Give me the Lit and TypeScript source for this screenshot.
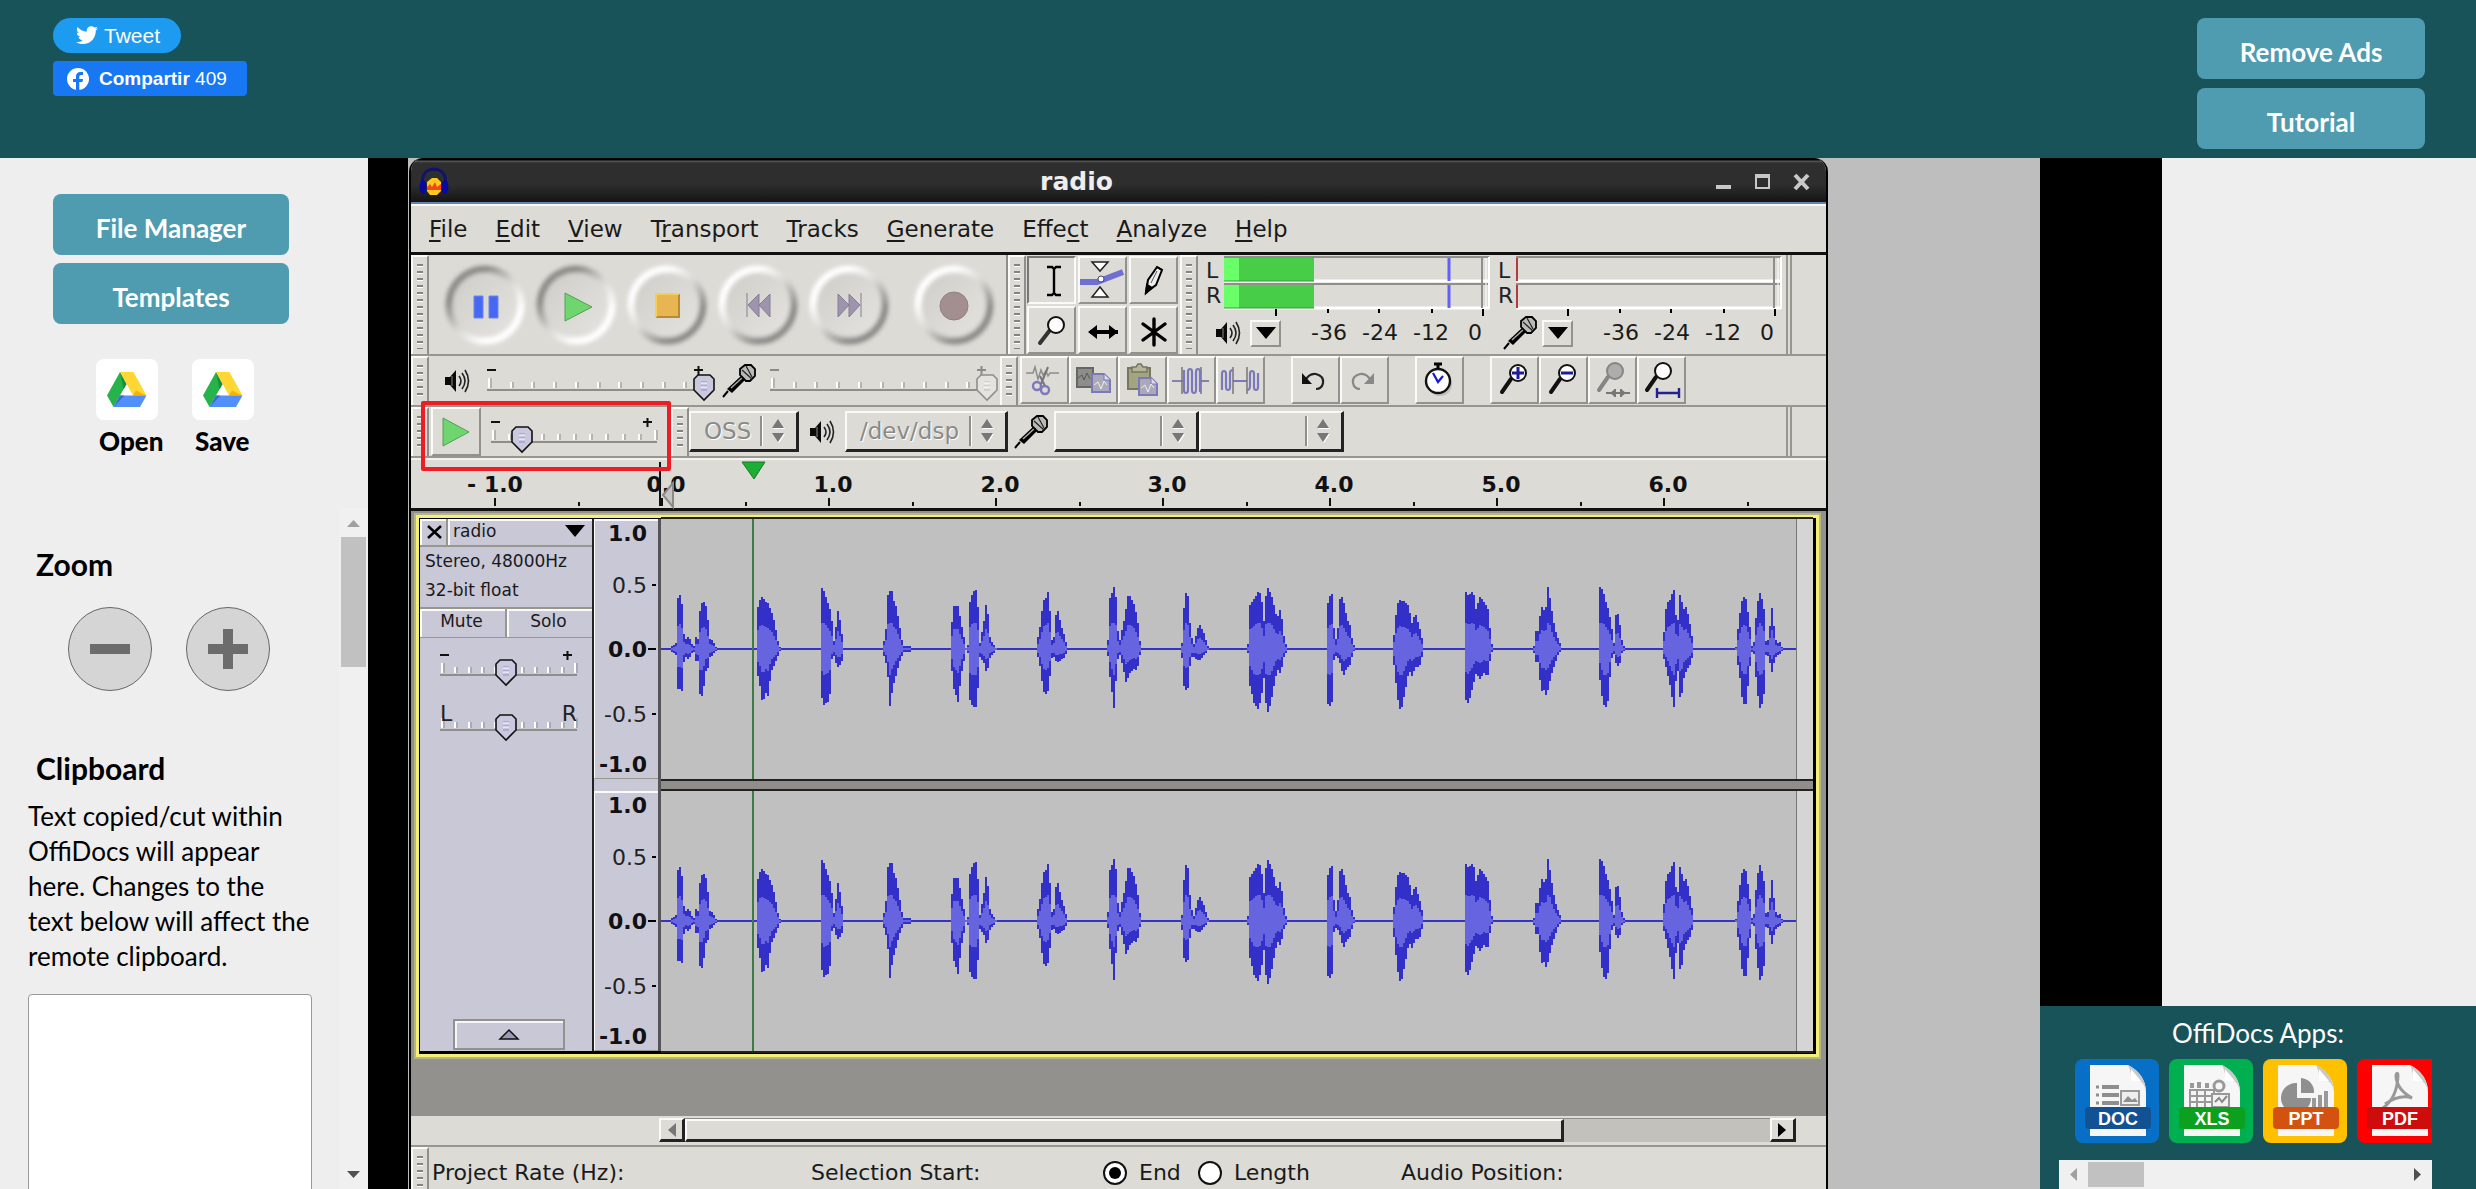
import { LitElement, html, css, svg } from "lit";
import { customElement } from "lit/decorators.js";

type Sample = [number, number, number];

/* Envelope samples of the recording: x, peak above the axis, peak below it. */
const early: Sample[] = [
  [757, 2, 2], [770, 5, 5], [776, 8, 8], [777, 50, 40], [785, 55, 40], [791, 42, 42], [793, 18, 15], [800, 10, 8], [808, 12, 11], [815, 8, 6], [822, 1, 1], [829, 12, 12], [836, 10, 12], [838, 35, 45], [848, 49, 47], [856, 45, 22], [862, 30, 20], [868, 10, 8], [876, 8, 6], [888, 0, 0],
  [1000, 0, 0], [1001, 40, 25], [1010, 52, 40], [1015, 52, 55], [1028, 46, 40], [1030, 46, 48], [1040, 38, 22], [1050, 25, 15], [1060, 5, 5], [1067, 0, 0],
  [1179, 0, 0], [1180, 62, 45], [1185, 60, 57], [1195, 50, 53], [1203, 41, 53], [1208, 36, 12], [1214, 5, 5], [1220, 20, 13], [1227, 40, 18], [1236, 20, 15], [1243, 0, 0],
  [1351, 0, 0], [1352, 4, 3], [1360, 15, 12], [1367, 58, 30], [1373, 58, 62], [1380, 58, 35], [1385, 42, 33], [1390, 43, 25], [1398, 25, 14], [1405, 10, 7], [1410, 3, 3], [1432, 3, 3], [1433, 0, 0],
];
const late: Sample[] = [
  [2, 0, 0], [3, 25, 20], [7, 43, 40], [14, 43, 53], [20, 25, 25], [28, 1, 1], [33, 5, 5], [34, 45, 50], [40, 58, 58], [46, 59, 58], [50, 35, 30], [52, 5, 8], [60, 30, 15], [64, 50, 26], [70, 10, 8], [74, 6, 6], [82, 0, 0],
  [151, 0, 0], [152, 8, 5], [158, 25, 20], [162, 48, 42], [168, 52, 46], [172, 60, 40], [177, 10, 10], [180, 5, 7], [186, 43, 14], [193, 25, 11], [200, 12, 8], [205, 0, 0],
  [274, 0, 0], [275, 5, 5], [278, 50, 25], [286, 62, 60], [290, 50, 25], [294, 2, 2], [298, 15, 10], [304, 30, 25], [308, 45, 37], [311, 56, 25], [320, 46, 20], [326, 33, 22], [331, 8, 6], [335, 0, 0],
  [403, 0, 0], [404, 5, 8], [408, 45, 40], [412, 59, 41], [416, 50, 38], [419, 15, 8], [425, 5, 8], [434, 26, 12], [443, 15, 6], [451, 0, 0],
  [518, 0, 0], [519, 3, 3], [522, 43, 35], [530, 50, 55], [537, 58, 60], [542, 55, 50], [548, 22, 25], [551, 60, 60], [555, 61, 64], [562, 50, 45], [570, 30, 20], [576, 41, 25], [582, 12, 8], [588, 0, 0],
  [657, 0, 0], [658, 45, 55], [665, 59, 58], [669, 20, 10], [674, 5, 6], [680, 55, 15], [685, 50, 28], [692, 30, 18], [698, 22, 16], [701, 8, 5], [706, 0, 0],
  [771, 0, 0], [772, 6, 8], [778, 40, 40], [782, 50, 58], [786, 48, 62], [792, 48, 45], [800, 42, 20], [804, 25, 28], [811, 36, 18], [818, 22, 18], [822, 12, 8], [826, 0, 0],
  [897, 0, 0], [898, 58, 50], [903, 53, 55], [912, 58, 35], [916, 40, 25], [924, 53, 30], [932, 45, 22], [936, 43, 32], [939, 35, 18], [942, 10, 7], [946, 0, 0],
  [1017, 0, 0], [1018, 8, 12], [1022, 22, 14], [1026, 15, 12], [1029, 46, 44], [1034, 38, 40], [1039, 43, 47], [1042, 64, 40], [1048, 40, 25], [1054, 20, 15], [1060, 10, 5], [1066, 0, 0],
  [1131, 0, 0], [1132, 62, 30], [1137, 60, 52], [1142, 48, 60], [1147, 40, 50], [1152, 25, 10], [1157, 5, 5], [1161, 41, 16], [1166, 30, 18], [1170, 10, 5], [1176, 0, 0],
  [1242, 0, 0], [1243, 12, 8], [1248, 45, 20], [1255, 50, 38], [1261, 60, 60], [1264, 40, 38], [1267, 12, 10], [1270, 55, 40], [1273, 53, 55], [1278, 40, 30], [1283, 43, 22], [1290, 22, 15], [1296, 0, 0],
  [1369, 0, 0], [1370, 8, 6], [1376, 35, 28], [1381, 53, 55], [1387, 50, 55], [1393, 25, 20], [1397, 3, 3], [1401, 8, 5], [1406, 45, 42], [1412, 58, 62], [1418, 40, 45], [1421, 8, 6], [1427, 10, 8], [1431, 46, 25], [1436, 20, 12], [1440, 5, 6], [1445, 8, 6], [1451, 0, 0],
];
const samples: Sample[] = [
  ...early.map(([x, a, b]): Sample => [x / 2.8 - 261, a, b]),
  ...late.map(([x, a, b]): Sample => [289 + x / 1.742, a, b]),
];

function levelAt(x: number): [number, number] {
  for (let i = 1; i < samples.length; i++) {
    if (samples[i][0] >= x) {
      const [x0, a0, b0] = samples[i - 1];
      const [x1, a1, b1] = samples[i];
      if (x < x0) return [0, 0];
      const t = (x - x0) / (x1 - x0 || 1);
      return [a0 + (a1 - a0) * t, b0 + (b1 - b0) * t];
    }
  }
  return [0, 0];
}

function envelope(scale: (v: number) => number): string {
  const mid = 130;
  let top = "";
  let bottom = "";
  for (let x = 0; x < 1137; x += 2) {
    const [a, b] = levelAt(x + 1);
    const up = Math.round(mid - scale(a));
    const down = Math.round(mid + scale(b));
    top += `L${x} ${up}L${x + 2} ${up}`;
    bottom = `L${x + 2} ${down}L${x} ${down}` + bottom;
  }
  return `M0 ${mid}${top}${bottom}Z`;
}
const peakPath = envelope((v) => v);
const rmsPath = envelope((v) => Math.min(v * 0.46, 26));

const speaker = html`<svg class="ic" width="24" height="26" viewBox="0 0 24 26" aria-hidden="true">
  <path d="M0 9h5l6-7v22l-6-7H0z" fill="#0a0a0a" /><path d="M7 8v10" stroke="#888" />
  <path d="M14 8q4 5 0 10M17 5q6 8 0 16M20 2q7 11 0 22" fill="none" stroke="#222" stroke-width="1.6" />
</svg>`;
const mic = html`<svg class="ic" width="34" height="34" viewBox="0 0 34 34" aria-hidden="true">
  <path d="M1 33l5-6" stroke="#000" stroke-width="2" />
  <path d="M5 25L20 11l4 4L10 29z" fill="#000" /><path d="M9 24l12-11" stroke="#aaa" stroke-width="1.5" />
  <path d="M18 5l5-4h6l4 4v7l-5 5h-4l-6-6z" fill="#b9b9b6" stroke="#000" stroke-width="1.8" />
  <path d="M20 6l10 9M24 2l6 11" stroke="#222" stroke-width="1.2" />
</svg>`;

const ring = (pressed: boolean, icon: unknown) => html`<svg width="90" height="98" viewBox="0 0 90 98" aria-hidden="true">
  <defs>
    <linearGradient id="up" x1="0.1" y1="0.05" x2="0.9" y2="0.95"><stop offset="0.2" stop-color="#fff" /><stop offset="0.5" stop-color="#d8d7d2" /><stop offset="0.8" stop-color="#8b8b87" /></linearGradient>
    <linearGradient id="down" x1="0.1" y1="0.05" x2="0.9" y2="0.95"><stop offset="0.2" stop-color="#8b8b87" /><stop offset="0.5" stop-color="#d8d7d2" /><stop offset="0.8" stop-color="#fff" /></linearGradient>
    <linearGradient id="dish" x1="0" y1="0" x2="1" y2="1"><stop offset="0" stop-color="#cdccc7" /><stop offset="1" stop-color="#e6e5e1" /></linearGradient>
    <filter id="soft" x="-20%" y="-20%" width="140%" height="140%"><feGaussianBlur stdDeviation="2" /></filter>
  </defs>
  <circle cx="45" cy="49" r="36" fill="url(#dish)" stroke=${pressed ? "url(#down)" : "url(#up)"} stroke-width="7" filter="url(#soft)" />
  ${icon}
</svg>`;
const transport = [
  { label: "Pause", pressed: true, icon: svg`<path d="M34 40h9v22h-9zM49 40h9v22h-9z" fill="#4668f2" stroke="#6c86ee" />` },
  { label: "Play", pressed: true, icon: svg`<path d="M34 37v28l27-14z" fill="#6fd66f" stroke="#5a9c58" />` },
  { label: "Stop", pressed: false, icon: svg`<path d="M34 38h23v23H34z" fill="#e7b552" /><path d="M34 61h23V38" fill="none" stroke="#b98a32" stroke-width="2" /><path d="M34 61V38h23" fill="none" stroke="#f4cf57" stroke-width="2" />` },
  { label: "Skip to start", pressed: false, icon: svg`<path d="M34 37v24M46 38v23L35 49zM57 38v23L46 49z" fill="#9f94b0" stroke="#857e90" />` },
  { label: "Skip to end", pressed: false, icon: svg`<path d="M57 37v24M34 38v23l11-12zM45 38v23l11-12z" fill="#9f94b0" stroke="#857e90" />` },
  { label: "Record", pressed: false, icon: svg`<circle cx="45" cy="50" r="14" fill="#a38f8f" stroke="#8f8080" />` },
];

const glass = (fill: string, extra: unknown, handle = "#111") => svg`
  <path d="M12 36L21 23" stroke=${handle} stroke-width="4" stroke-linecap="round" />
  <circle cx="28" cy="17" r="8" fill=${fill} stroke=${handle} stroke-width="2" />${extra}`;

const tools = [
  { label: "Selection tool", pressed: true, icon: svg`<path d="M20 11h5l2 2 2-2h5M27 13v24M20 39h5l2-2 2 2h5" fill="none" stroke="#000" stroke-width="2.4" />` },
  { label: "Envelope tool", pressed: false, icon: svg`<path d="M1 26h18l26-10" fill="none" stroke="#6e6fd0" stroke-width="6" /><path d="M14 6h16l-8 9zM14 41h16l-8-10z" fill="#fff" stroke="#222" stroke-width="1.5" /><circle cx="23" cy="23" r="3" fill="#fff" stroke="#446" />` },
  { label: "Draw tool", pressed: false, icon: svg`<path d="M17 36l2-12 9-13 5 3-6 15z" fill="#eee" stroke="#000" stroke-width="2" /><path d="M17 37l1-8 5 3zM28 11l5 3" fill="#000" stroke="#000" stroke-width="2" /><path d="M22 27l6-12" stroke="#555" />` },
  { label: "Zoom tool", pressed: false, icon: svg`<path d="M13 37L23 24" stroke="#333" stroke-width="4" stroke-linecap="round" /><circle cx="29" cy="19" r="8" fill="#fff" stroke="#111" stroke-width="2" />` },
  { label: "Time shift tool", pressed: false, icon: svg`<path d="M12 26h28" stroke="#000" stroke-width="4" /><path d="M10 26l9-7v14zM40 26l-9-7v14z" fill="#000" />` },
  { label: "Multi tool", pressed: false, icon: svg`<path d="M25 13v26M14 18l22 16M36 18L14 34" stroke="#000" stroke-width="3.4" stroke-linecap="round" />` },
];

const editGroups = [
  [
    { label: "Cut", icon: svg`<path d="M6 17h7l2-6 3 12 3-9 2 5 3-4 2 5 2-3h9" fill="none" stroke="#8d8d8d" stroke-width="1.5" /><path d="M28 11l-7 17M20 20l5 10" stroke="#777" stroke-width="2" /><g fill="none" stroke="#7b78bb" stroke-width="2.4"><circle cx="17" cy="30" r="4" /><circle cx="25" cy="34" r="4" /></g>` },
    { label: "Copy", icon: svg`<path d="M8 12h16v19H8z" fill="#8d8d8b" stroke="#666" stroke-width="2" /><path d="M9 22l4-3 2 5 3-7 3 6" stroke="#555" fill="none" /><path d="M23 18h12l6 6v12H23z" fill="#aaa9b8" stroke="#7b78bb" stroke-width="2" /><path d="M35 18v6h6" fill="#dde" stroke="#7b78bb" /><path d="M25 29l4-3 3 7 3-8 3 4" fill="none" stroke="#eee" />` },
    { label: "Paste", icon: svg`<path d="M10 12h22v21H10z" fill="#a3a482" stroke="#77775f" stroke-width="2" /><path d="M14 16v-5h4l2-3h3l2 3h4v5z" fill="#b5b598" stroke="#77775f" stroke-width="1.5" /><path d="M21 22h12l6 6v11H21z" fill="#aaa9b8" stroke="#7b78bb" stroke-width="2" /><path d="M33 22v6h6" fill="#dde" stroke="#7b78bb" /><path d="M23 32l4-3 3 7 3-8 3 4" fill="none" stroke="#eee" />` },
    { label: "Trim", icon: svg`<path d="M5 25h11M33 25h9" stroke="#8582a8" stroke-width="2" /><path d="M15 11v27M34 11v27" stroke="#777" stroke-width="1.5" /><path d="M17 14v20q0 3 2 3t2-3V16q0-3 2-3t2 3v18q0 3 2 3t2-3V16q0-3 2-3t2 3v20" fill="none" stroke="#7b78bb" stroke-width="2.2" />` },
    { label: "Silence", icon: svg`<path d="M17 25h14" stroke="#7b78bb" stroke-width="2" /><path d="M17 11v27M31 11v27" stroke="#777" stroke-width="1.5" /><path d="M6 34V18q0-3 2-3t2 3v13q0 3 2 3t2-3V17q0-3 3-3M31 34q3 0 3-4V18q0-3 2-3t2 3v13q0 3 2 3t2-3V17" fill="none" stroke="#7b78bb" stroke-width="2.2" />` },
  ],
  [
    { label: "Undo", icon: svg`<path d="M14 25q4-8 11-7 8 2 7 9-1 6-7 6" fill="none" stroke="#222" stroke-width="2.2" /><path d="M11 17v11h10z" fill="#111" />` },
    { label: "Redo", icon: svg`<path d="M31 25q-4-8-11-7-8 2-7 9 1 6 7 6" fill="none" stroke="#888" stroke-width="2.2" /><path d="M34 17v11H24z" fill="#888" />` },
  ],
  [
    { label: "Timer", icon: svg`<ellipse cx="25" cy="28" rx="12" ry="12" fill="#aaa" opacity="0.6" /><circle cx="23" cy="25" r="12" fill="#fff" stroke="#111" stroke-width="2.4" /><path d="M23 13V7M19 8h8" stroke="#000" stroke-width="3" /><path d="M18 17l5 9 5-6" fill="none" stroke="#1818d0" stroke-width="2.2" />` },
  ],
  [
    { label: "Zoom in", icon: glass("#fff", svg`<path d="M22 17h12M28 11v12" stroke="#1c1c9c" stroke-width="3" />`) },
    { label: "Zoom out", icon: glass("#fff", svg`<path d="M22 17h12" stroke="#1c1c9c" stroke-width="3" />`) },
    { label: "Fit selection", icon: svg`<g transform="translate(-1 -2)">${glass("#adadab", svg``, "#858585")}</g><path d="M18 37h24M27 33v8M33 33v8" stroke="#777" stroke-width="2" /><path d="M22 37l5-4v8zM38 37l-5-4v8z" fill="#777" />` },
    { label: "Fit project", icon: svg`<g transform="translate(-2 -2)">${glass("#fff", svg``)}</g><path d="M20 37h22M20 32v10M42 32v10" stroke="#22228f" stroke-width="2.4" />` },
  ],
];

const thumb = (x: number, off = false) => svg`
  <path d=${`M${x - 10} 12l4-4h12l4 4v11l-10 10l-10-10z`} fill=${off ? "#e4e3df" : "#c9c8de"} stroke=${off ? "#8e8e8b" : "#111"} stroke-width="1.6" />
  <path d=${`M${x - 3} 15h6M${x - 3} 19h6M${x - 3} 23h6`} stroke=${off ? "#bbb" : "#8f8fc0"} />
  <path d=${`M${x - 3} 16h6M${x - 3} 20h6`} stroke="#fff" />`;

function scale(label: string, w: number, pos: number, ticks: number, ends: [string, string], off = false) {
  const step = (w - 4) / ticks;
  const ink = off ? "#8a8a87" : "#111";
  const letters = ends[0] !== "-";
  return html`<span class="scale">
    <svg width=${w} height="36" viewBox=${`0 0 ${w} 36`} aria-hidden="true">
      ${Array.from({ length: ticks + 1 }, (_, i) => {
        const h = i === 0 || i === ticks ? 11 : 15;
        const x = Math.round(2 + i * step);
        return svg`<path d=${`M${x} ${h}V21`} stroke="#fff" stroke-width="2" /><path d=${`M${x + 2} ${h}V21`} stroke="#8f8e8a" />`;
      })}
      <path d=${`M0 23H${w}`} stroke="#8f8e8a" stroke-width="2" />
      ${letters
        ? svg`<text x="0" y="14" class="axis">${ends[0]}</text><text x=${w} y="14" class="axis" text-anchor="end">${ends[1]}</text>`
        : svg`<path d=${`M0 3h9M${w - 14} 3h9M${w - 9.5} -1v9`} stroke=${ink} stroke-width="2" />`}
      ${thumb(pos, off)}
    </svg>
    <input type="range" aria-label=${label} ?disabled=${off} />
  </span>`;
}

const grip = html`<span class="grip"></span>`;
const trail = html`<span class="fill"></span><span class="trail"></span>`;

const combo = (label: string, value: string, cls: string) => html`<span class="combo ${cls}">
  <select aria-label=${label} disabled><option>${value}</option></select>
  <svg width="14" height="26" viewBox="0 0 14 26" aria-hidden="true"><path d="M1 11h12L7 2zM1 16h12l-6 9z" fill="#fff" /><path d="M0 10h12L6 1zM0 15h12l-6 9z" fill="#777" /></svg>
</span>`;

const channel = () => html`<svg class="wave" width="100%" height="260" aria-hidden="true">
  <path d="M0 130H1137" stroke="#3333c8" stroke-width="2" />
  <path d=${peakPath} fill="#3230c8" /><path d=${rmsPath} fill="#6664de" />
  <path d="M92 0V260" stroke="#3d7a48" stroke-width="2" />
</svg>`;
const levels = () => html`<svg class="levels" width="64" height="260">
  <g text-anchor="end">
    <text class="axis b" x="52" y="20">1.0</text><text class="axis" x="52" y="72">0.5</text>
    <text class="axis b" x="52" y="136">0.0</text><text class="axis" x="52" y="201">-0.5</text>
    <text class="axis b" x="52" y="251">-1.0</text>
  </g>
  <path d="M57 64h4M53 128h8M57 193h4" stroke="#000" stroke-width="2" />
</svg>`;

function meter(kind: "out" | "in") {
  const out = kind === "out";
  return html`<div class="meter">
    <svg width="292" height="61" viewBox="0 0 292 61" role="img" aria-label=${out ? "Playback level" : "Recording level"}>
      <text class="axis" x="8" y="23">L</text><text class="axis" x="8" y="48">R</text>
      <path d="M26 2H291M26 29H291" stroke="#8f8e8a" stroke-width="2" />
      <path d="M26 26H291M26 53H291" stroke="#fff" stroke-width="3" />
      <path d="M288 3V53" stroke="#fff" /><path d="M291 2V54" stroke="#fff" stroke-width="2" />
      <path d="M284 2V53" stroke="#8f8e8a" stroke-width="2" />
      ${out
        ? svg`<path d="M26 3h90v23H26zM26 30h90v23H26z" fill="#48cd48" /><path d="M26 3h15v23H26zM26 30h15v23H26z" fill="#68ff68" />
           <path d="M26 26h90M26 53h90" stroke="#2f9e2f" /><path d="M251 3v23M251 30v23" stroke="#6060ff" stroke-width="3" />`
        : svg`<path d="M27 3v23M27 30v23" stroke="#b23c3c" stroke-width="2" />`}
      <path d="M78 54v7M285 54v7M130 54v4M181 54v4M234 54v4" stroke="#000" stroke-width="2" />
    </svg>
    <div class="meter-row">
      <span class="slot">${out ? speaker : mic}</span>
      <button class="drop" aria-label=${out ? "Playback meter options" : "Recording meter options"}><svg width="20" height="12" viewBox="0 0 20 12"><path d="M0 0h20L10 12z" /></svg></button>
      <span class="num first">-36</span><span class="num">-24</span><span class="num">-12</span><span class="num last">0</span>
    </div>
  </div>`;
}

const page = (body: unknown) => svg`
  <path d="M15 6h38q18 10 18 27v44H15z" fill="#f6f6f6" />
  <path d="M53 6q4 8 3 16h9q5 3 6 11Q70 14 53 6z" fill="#c9c9c9" /><path d="M56 10v12h10z" fill="#fff" />${body}`;
const apps = [
  { name: "DOC", bg: "#0770c6", band: "#125294", art: svg`<path d="M21 28h3M21 36h3M21 44h3" stroke="#8e8e8e" stroke-width="3" /><path d="M27 28h17M27 36h17M27 44h17" stroke="#8e8e8e" stroke-width="4" /><path d="M46 32h18v14H46z" fill="#eee" stroke="#999" stroke-width="2" /><path d="M48 43l5-6 4 4 3-2 3 4z" fill="#8e8e8e" />` },
  { name: "XLS", bg: "#00b050", band: "#0ca01f", art: svg`<path d="M21 31h24v18H21zM21 37h24M21 43h24M28 31v18M36 31v18" fill="none" stroke="#999" stroke-width="2" /><path d="M21 24h4v5h-4zM28 23h4v6h-4zM36 24h4v5h-4z" fill="#999" /><circle cx="50" cy="27" r="5" fill="none" stroke="#999" stroke-width="3" /><path d="M43 35h17v13H43z" fill="#f2f2f2" stroke="#999" stroke-width="2" /><path d="M46 43l4-4 3 4 5-6" fill="none" stroke="#888" stroke-width="2" />` },
  { name: "PPT", bg: "#ffc000", band: "#d4520f", art: svg`<path d="M34 24a15 15 0 1 0 14 15H34z" fill="#8f8f8f" /><path d="M38 19a14 14 0 0 1 13 15H38z" fill="#8f8f8f" /><path d="M51 49V39M57 49V36M63 49V32" stroke="#999" stroke-width="4" />` },
  { name: "PDF", bg: "#ff0000", band: "#cf0c0c", art: svg`<path d="M26 49q14-10 15-32 0-5-2-1 0 14 16 23-12-4-27 6" fill="none" stroke="#999" stroke-width="3" />` },
];

const drive = html`<svg width="40" height="36" viewBox="0 0 40 36" aria-hidden="true">
  <path d="M13 0L0 23.500l6.500 11.500L19.500 12z" fill="#26b34a" /><path d="M13 0l6.500 12-3 5.500z" fill="#1d8f3c" />
  <path d="M13 0h13.500l13 23.500H26z" fill="#ffd735" /><path d="M26 23.500l3-5 10 5z" fill="#f0b40d" />
  <path d="M13 23.500h26.500L33 35H6.500z" fill="#5190f8" /><path d="M13 23.500h4.500L6.500 35z" fill="#3b6bd0" />
</svg>`;

const menus: [string, string, string][] = [
  ["", "F", "ile"], ["", "E", "dit"], ["", "V", "iew"], ["T", "r", "ansport"], ["", "T", "racks"],
  ["", "G", "enerate"], ["Effe", "c", "t"], ["", "A", "nalyze"], ["", "H", "elp"],
];

@customElement("audacity-window")
class AudacityWindow extends LitElement {
  static styles = css`
    :host { display: flex; flex-direction: column; box-sizing: border-box; min-width: 0; overflow: hidden; font: 22px "DejaVu Sans", sans-serif; color: #1a1a1a; background: #dcdbd6; border: solid #000; border-width: 0 2px; border-radius: 14px 14px 0 0; --dk: #8f8e8a; }
    * { box-sizing: border-box; }
    button { font: inherit; color: inherit; padding: 0; margin: 0; border: 0; background: none; display: block; }
    svg { display: block; overflow: visible; flex: none; }
    .title { display: flex; align-items: center; height: 46px; flex: none; padding: 3px 17px 0 8px; border-bottom: 2px solid #6683b4; background: linear-gradient(#000 0 2px, #5c5c5c 3px, #2f2f2f 5px, #2e2e2e 60%, #141414); }
    .title h1 { flex: 1; margin: 0; padding-right: 12px; text-align: center; font-size: 25px; line-height: 30px; color: #eee; }
    .winbtns { display: flex; gap: 24px; align-items: center; }
    .menu { display: flex; gap: 28px; align-items: center; flex: none; height: 51px; padding: 0 18px; border-top: 2px solid #f8f8f6; border-bottom: 3px solid #111; font-size: 23px; white-space: nowrap; }
    .menu u { text-decoration-thickness: 2px; text-underline-offset: 3px; text-decoration-skip-ink: none; }
    .row { position: relative; display: flex; flex: none; height: 51px; border-bottom: 2px solid #97968f; align-items: stretch; }
    .row.tall { height: 101px; }
    .callout { position: absolute; z-index: 2; left: 10px; top: -6px; width: 250px; height: 70px; border: 4px solid #ee1c25; border-radius: 2px; pointer-events: none; }
    .grip { flex: none; width: 18px; border: solid; border-width: 2px 2px 0 2px; border-color: #fafaf8 var(--dk) #fff #fafaf8; background: repeating-linear-gradient(#84837f 0 2px, #fff 2px 3px, #dcdbd6 3px 7px) content-box; padding: 7px 4px 5px; }
    .grip.edit { margin-right: 2px; }
    .fill { flex: 1; }
    .trail { flex: none; width: 6px; margin-right: 34px; border: solid #97968f; border-width: 0 2px; }
    .transport { display: flex; gap: 1px; width: 579px; flex: none; padding: 0 11px; border-right: 2px solid var(--dk); }
    .transport button:last-child { margin-left: 14px; }
    .tools { display: grid; grid-template-columns: repeat(3, 49px); gap: 2px; width: 154px; padding: 1px; flex: none; }
    .tb { width: 49px; height: 48px; border: solid; border-width: 2px; border-color: #fafaf8 #92918d #92918d #fafaf8; overflow: hidden; }
    .tb.pressed { border-color: #777 #fafaf8 #fafaf8 #777; }
    .tb svg { margin: -2px; }
    .meter { width: 292px; flex: none; }
    .meter-row { display: flex; height: 38px; align-items: center; padding-bottom: 4px; }
    .slot { width: 52px; padding-left: 8px; display: flex; justify-content: center; }
    .drop { width: 31px; height: 27px; display: grid; place-items: center; border: 2px solid; border-color: #fafaf8 #92918d #92918d #fafaf8; }
    .num { width: 51px; text-align: right; line-height: 26px; }
    .num.first { width: 66px; }
    .num.last { width: 33px; }
    .axis { font: 22px "DejaVu Sans", sans-serif; fill: #222; }
    .axis.b { font-weight: bold; fill: #111; }
    .ic { align-self: center; }
    .scale { position: relative; flex: none; display: block; }
    .scale input { position: absolute; inset: 0; width: 100%; height: 100%; margin: 0; opacity: 0; }
    .mixer { display: flex; width: 571px; flex: none; padding-left: 16px; align-items: center; }
    .mixer .scale { margin-top: 8px; }
    .s1 { width: 18px; flex: none; }
    .s2 { width: 14px; flex: none; }
    .s3 { width: 11px; flex: none; }
    .s4 { width: 6px; flex: none; }
    .group { display: flex; margin-right: 26px; }
    .play { width: 50px; display: grid; place-items: center; border: 2px solid; border-color: #fafaf8 #92918d #92918d #fafaf8; margin-left: 2px; flex: none; }
    .speed { display: flex; align-items: center; padding: 10px 0 0 10px; width: 190px; flex: none; }
    .combo { display: flex; align-items: center; gap: 10px; height: 41px; align-self: center; padding: 0 10px; border: solid; border-width: 2px 3px 3px 2px; border-color: #fafaf8 #222 #222 #fafaf8; flex: none; font-size: 23px; }
    .combo select { appearance: none; border: 0; border-right: 2px solid var(--dk); background: none; font: inherit; height: 30px; color: #8a8a87; opacity: 1; flex: 1; min-width: 0; padding: 0 0 0 3px; text-shadow: 1px 1px #fff; box-shadow: 1px 0 #fff; }
    .w1 { width: 110px; }
    .w2 { width: 163px; }
    .w3 { width: 145px; }
    .ruler { flex: none; height: 53px; border-top: 2px solid #f2f2ef; border-bottom: 3px solid #111; }
    .stage { background: #92918d; flex: none; padding: 7px 10px 62px 8px; }
    .track { display: grid; grid-template-columns: 174px 67px 1fr 17px; height: 536px; border: solid #000; border-width: 1px 3px 3px 1px; box-shadow: 0 0 0 3px #f3ef79, 0 0 0 5px #b8b684; background: #c0c0c0; }
    .panel { display: flex; flex-direction: column; background: #c9c8d7; border-right: 2px solid #222; font-size: 17px; }
    .pair { display: grid; gap: 2px; height: 28px; flex: none; background: #97968f; border-bottom: 2px solid #97968f; }
    .pair.head { grid-template-columns: 26px 1fr; }
    .pair.ms { grid-template-columns: 1fr 1fr; height: 31px; border-top: 2px solid #97968f; }
    .pair button { background: #c9c8d7; border: solid #fafaf8; border-width: 2px 0 0 2px; display: flex; align-items: center; justify-content: center; line-height: 20px; padding-bottom: 2px; }
    .pair.ms button { padding: 0 4px 6px 0; }
    .pair .name { justify-content: space-between; padding: 0 7px 4px 3px; }
    .info { margin: 0; padding: 0 5px; line-height: 29px; height: 60px; white-space: nowrap; }
    .gain { padding: 14px 0 0 20px; display: grid; gap: 19px; }
    .collapse { margin: auto 27px 1px 33px; width: 112px; height: 31px; display: grid; place-items: center; border: 2px solid #92918d; box-shadow: inset 2px 2px #f5f5fa; }
    .levelcol { background: #c9c8d7; display: grid; gap: 12px; border-right: 3px solid #555; }
    .levels { border-top: 2px solid #fafaff; border-bottom: 1px solid #97968f; border-left: 1px solid #fff; width: 64px; height: 260px; }
    .waves { display: grid; gap: 12px; background: #8f8e8a; min-width: 0; }
    .wave { background: #c0c0c0; outline: 2px solid #222; overflow: hidden; clip-path: inset(-2px 0); }
    .tail { display: grid; gap: 12px; background: #8f8e8a; }
    .tail span { background: #d5d5d5; border-left: 1px solid #777; outline: 2px solid #222; clip-path: inset(-2px 0); }
    .scroll { display: flex; flex: none; height: 29px; padding: 2px 30px 3px 248px; }
    .scroll button, .bar { border: solid; border-width: 2px 3px 3px 2px; border-color: #fafaf8 #222 #222 #fafaf8; background: #dcdbd6; display: grid; place-items: center; }
    .scroll button { width: 26px; flex: none; }
    .trough { flex: 1; background: #c2c1bb; display: flex; border-top: 1px solid #8f8e8a; }
    .bar { width: 81%; }
    .status { display: flex; flex: none; height: 60px; border-top: 2px solid #97968f; line-height: 52px; white-space: nowrap; }
    .status > .grip { margin-right: 3px; }
    .c1 { width: 379px; } .c2 { width: 292px; } .c3 { width: 95px; } .c4 { width: 203px; }
    .status label { display: flex; align-items: center; gap: 12px; height: 52px; }
    .status input { appearance: none; width: 24px; height: 24px; margin: 0; border: 2px solid #111; border-radius: 50%; background: #fff; display: grid; place-items: center; }
    .status input:checked::before { content: ""; width: 12px; height: 12px; border-radius: 50%; background: #000; }
  `;

  render() {
    return html`
      <header class="title">
        <svg width="30" height="30" viewBox="0 0 30 30" aria-hidden="true"><path d="M4 20Q1 3 15 2q14 1 11 18" fill="none" stroke="#11116e" stroke-width="3" /><path d="M8 15l5-4h5l4 4v9l-4 4h-7l-3-4z" fill="#ffc81e" /><path d="M8 20l3-3 2 3 3-5 2 5 4-3v6H8z" fill="#f4481a" /><ellipse cx="4" cy="20" rx="3.500" ry="7" fill="#0808a0" /><ellipse cx="26" cy="20" rx="3.500" ry="7" fill="#0808a0" /></svg>
        <h1>radio</h1>
        <div class="winbtns">
          <button aria-label="Minimize"><svg width="15" height="16" viewBox="0 0 15 16"><path d="M0 13h15" stroke="#c8c8c8" stroke-width="4" /></svg></button>
          <button aria-label="Maximize"><svg width="15" height="16" viewBox="0 0 15 16"><path d="M1 1h13v13H1z M1 3h13" fill="none" stroke="#c8c8c8" stroke-width="2" /></svg></button>
          <button aria-label="Close"><svg width="15" height="16" viewBox="0 0 15 16"><path d="M1 1l13 14M14 1L1 15" stroke="#c8c8c8" stroke-width="4" /></svg></button>
        </div>
      </header>
      <nav class="menu">${menus.map(([a, u, b]) => html`<button>${a}<u>${u}</u>${b}</button>`)}</nav>

      <div class="row tall">
        ${grip}
        <div class="transport">${transport.map((b) => html`<button aria-label=${b.label}>${ring(b.pressed, b.icon)}</button>`)}</div>
        ${grip}
        <div class="tools">${tools.map((t) => html`<button class="tb ${t.pressed ? "pressed" : ""}" aria-label=${t.label}><svg width="49" height="48" viewBox="0 0 49 48">${t.icon}</svg></button>`)}</div>
        ${grip}
        ${meter("out")}${meter("in")}
        ${trail}
      </div>

      <div class="row">
        ${grip}
        <div class="mixer">
          ${speaker}<span class="s1"></span>
          ${scale("Playback volume", 221, 217, 10, ["-", "+"])}
          <span class="s2"></span>${mic}<span class="s2"></span>
          ${scale("Recording volume", 221, 217, 10, ["-", "+"], true)}
        </div>
        <span class="grip edit"></span>
        ${editGroups.map((g) => html`<div class="group">${g.map((b) => html`<button class="tb" aria-label=${b.label}><svg width="49" height="48" viewBox="0 0 49 48">${b.icon}</svg></button>`)}</div>`)}
      </div>

      <div class="row">
        ${grip}
        <button class="play" aria-label="Play at speed"><svg width="30" height="30" viewBox="0 0 30 30"><path d="M2 1v28l26-14z" fill="#6fd66f" stroke="#5a9c58" /></svg></button>
        <div class="speed">${scale("Playback speed", 166, 31, 10, ["-", "+"])}</div>
        ${grip}
        ${combo("Audio host", "OSS", "w1")}
        <span class="s3"></span>${speaker}<span class="s3"></span>
        ${combo("Playback device", "/dev/dsp", "w2")}
        <span class="s4"></span>${mic}<span class="s4"></span>
        ${combo("Recording device", "", "w3")}${combo("Recording channels", "", "w3")}
        ${trail}
        <span class="callout"></span>
      </div>

      <div class="ruler">
        <svg width="100%" height="48" role="img" aria-label="Timeline">
          ${["- 1.0", "0.0", "1.0", "2.0", "3.0", "4.0", "5.0", "6.0"].map((t, i) => {
            const x = 84 + i * 167;
            return svg`<text class="axis b" text-anchor="middle" x=${i ? x + 4 : x} y="32">${t}</text><path d=${`M${x} 38v8M${x + 84} 42v4`} stroke="#111" stroke-width="2" />`;
          })}
          <path d="M249 2V46" stroke="#111" stroke-width="2" />
          <path d="M252 35l10-12v24z" fill="#c4c4c4" stroke="#8a8a88" stroke-width="2" />
          <path d="M331 2h23l-11 17z" fill="#1fae35" stroke="#157a25" />
        </svg>
      </div>

      <div class="stage">
        <section class="track" aria-label="radio track">
          <div class="panel">
            <div class="pair head">
              <button aria-label="Close track"><svg width="15" height="14" viewBox="0 0 15 14"><path d="M1 1l13 12M14 1L1 13" stroke="#000" stroke-width="2.500" /></svg></button>
              <button class="name">radio<svg width="20" height="12" viewBox="0 0 20 12"><path d="M0 0h20L10 12z" /></svg></button>
            </div>
            <p class="info">Stereo, 48000Hz<br />32-bit float</p>
            <div class="pair ms"><button>Mute</button><button>Solo</button></div>
            <div class="gain">
              ${scale("Gain", 137, 66, 10, ["-", "+"])}
              ${scale("Pan", 137, 66, 10, ["L", "R"])}
            </div>
            <button class="collapse" aria-label="Collapse track"><svg width="20" height="11" viewBox="0 0 20 11"><path d="M1 10L10 1l9 9z" fill="#9b98b8" stroke="#111" stroke-width="1.500" /></svg></button>
          </div>
          <div class="levelcol">${levels()}${levels()}</div>
          <div class="waves">${channel()}${channel()}</div>
          <div class="tail"><span></span><span></span></div>
        </section>
      </div>

      <div class="scroll">
        <button aria-label="Scroll left"><svg width="8" height="14" viewBox="0 0 8 14"><path d="M8 0v14L0 7z" fill="#777" /></svg></button>
        <div class="trough"><div class="bar"></div></div>
        <button aria-label="Scroll right"><svg width="8" height="14" viewBox="0 0 8 14"><path d="M0 0v14l8-7z" /></svg></button>
      </div>

      <div class="status">
        ${grip}
        <span class="c1">Project Rate (Hz):</span><span class="c2">Selection Start:</span>
        <label class="c3"><input type="radio" name="end" checked />End</label>
        <label class="c4"><input type="radio" name="end" />Length</label>
        <span>Audio Position:</span>
      </div>
    `;
  }
}

@customElement("app-root")
class AppRoot extends LitElement {
  static styles = css`
    :host { display: flex; flex-direction: column; height: 100vh; overflow: hidden; font: 26px/35px Lato, sans-serif; color: #000; background: #eee; }
    * { box-sizing: border-box; }
    button { font: inherit; border: 0; margin: 0; padding: 0; color: inherit; background: none; }
    svg { display: block; flex: none; }
    .top { display: flex; justify-content: space-between; flex: none; height: 158px; padding: 18px 51px 0 53px; background: #19535a; }
    .social { display: flex; flex-direction: column; align-items: flex-start; gap: 8px; font: 21px/35px "Liberation Sans", sans-serif; color: #fff; }
    .social a { display: flex; align-items: center; height: 35px; color: #fff; text-decoration: none; }
    .tweet { gap: 6px; padding: 0 21px 0 23px; border-radius: 18px; background: #1d9bf0; }
    .fb { gap: 10px; padding: 0 20px 0 14px; border-radius: 4px; background: #1877f2; font-size: 19px; }
    .cta { display: block; width: 100%; height: 61px; padding-top: 8px; border-radius: 8px; background: #4f9bb0; color: #fff; font-weight: bold; }
    .actions { display: grid; gap: 9px; align-content: start; width: 228px; }
    .main { display: flex; flex: 1; min-height: 0; }
    .side { display: flex; flex-direction: column; width: 368px; flex: none; }
    .sidebtns { display: grid; gap: 8px; padding: 36px 79px 0 53px; }
    .drives { display: flex; gap: 34px; padding: 35px 0 0 96px; height: 183px; flex: none; font-weight: bold; }
    .drives button { display: flex; flex-direction: column; gap: 4px; align-items: flex-start; width: 62px; white-space: nowrap; }
    .drives b { padding-left: 3px; }
    .tile { width: 62px; height: 61px; display: grid; place-items: center; border-radius: 8px; background: #fff; }
    .panel { display: flex; flex: 1; min-height: 0; }
    .content { flex: 1; padding: 37px 27px 0 28px; overflow: hidden; }
    h2 { margin: 0; padding-left: 8px; font-size: 30px; line-height: 40px; }
    .zooms { display: flex; gap: 34px; padding: 23px 0 57px 40px; }
    .zooms button { width: 84px; height: 84px; display: grid; place-items: center; border: 1px solid #666; border-radius: 50%; background: #d5d5d5; }
    .content p { margin: 11px 0 0; }
    textarea { display: block; width: 100%; height: 260px; margin-top: 20px; border: 1px solid #999; border-radius: 4px; background: #fff; resize: none; }
    .vbar { width: 29px; background: #f0f0f0; display: flex; flex-direction: column; align-items: center; padding: 12px 0 11px; flex: none; margin-top: 1px; }
    .vbar i { width: 25px; height: 130px; margin: 10px 0 auto; background: #c1c1c1; }
    .remote { display: flex; flex: 1; min-width: 0; padding-left: 40px; background: #000; }
    .desk { flex: 1; min-width: 0; background: #bebebe; padding-left: 1px; display: flex; align-items: flex-start; }
    audacity-window { width: 87%; }
    .right { display: flex; flex-direction: column; width: 436px; flex: none; }
    .blank { flex: 1; background: linear-gradient(90deg, #000 122px, #eee 122px); }
    .apps { flex: none; height: 183px; padding: 10px 44px 0 19px; background: #19535a; color: #fff; display: flex; flex-direction: column; }
    .apps h3 { margin: 0 -25px 8px 0; text-align: center; font-weight: normal; font-size: 26px; line-height: 35px; }
    .strip { display: flex; gap: 10px; padding-left: 16px; overflow: hidden; }
    .strip a { flex: none; }
    .strip text { font: bold 18px "Liberation Sans", sans-serif; fill: #fff; }
    .hbar { display: flex; align-items: center; height: 29px; margin-top: auto; padding: 0 11px; background: #f0f0f0; }
    .hbar i { width: 56px; height: 25px; margin: 0 auto 0 11px; background: #c1c1c1; }
  `;

  render() {
    return html`
      <header class="top">
        <div class="social">
          <a class="tweet" href="#"><svg width="22" height="20" viewBox="0 3 24 20" aria-hidden="true"><path fill="#fff" d="M23.954 4.569c-.885.389-1.830.654-2.825.775 1.014-.611 1.794-1.574 2.163-2.723-.951.555-2.005.959-3.127 1.184-.896-.959-2.173-1.559-3.591-1.559-2.717 0-4.920 2.203-4.920 4.917 0 .390.045.765.127 1.124C7.691 8.094 4.066 6.130 1.640 3.161c-.427.722-.666 1.561-.666 2.475 0 1.710.870 3.213 2.188 4.096-.807-.026-1.566-.248-2.228-.616v.061c0 2.385 1.693 4.374 3.946 4.827-.413.111-.849.171-1.296.171-.314 0-.615-.030-.916-.086.631 1.953 2.445 3.377 4.604 3.417-1.680 1.319-3.809 2.105-6.102 2.105-.390 0-.779-.023-1.170-.067 2.189 1.394 4.768 2.209 7.557 2.209 9.054 0 13.999-7.496 13.999-13.986 0-.209 0-.420-.015-.630.961-.689 1.800-1.560 2.460-2.548z" /></svg>Tweet</a>
          <a class="fb" href="#"><svg width="22" height="22" viewBox="0 0 22 22" aria-hidden="true"><circle cx="11" cy="11" r="11" fill="#fff" /><path fill="#1877f2" d="M9 22v-8H6v-3h3V8.500q0-4.500 4.500-4.500H16v3h-2q-1.700 0-1.700 1.700V11H16l-.5 3h-3.200v8z" /></svg><span><b>Compartir</b> 409</span></a>
        </div>
        <div class="actions"><button class="cta">Remove Ads</button><button class="cta">Tutorial</button></div>
      </header>
      <div class="main">
        <aside class="side">
          <div class="sidebtns"><button class="cta">File Manager</button><button class="cta">Templates</button></div>
          <div class="drives">
            <button><span class="tile">${drive}</span><b>Open</b></button>
            <button><span class="tile">${drive}</span><b>Save</b></button>
          </div>
          <div class="panel">
            <div class="content">
              <h2>Zoom</h2>
              <div class="zooms">
                <button aria-label="Zoom out"><svg width="42" height="42" viewBox="0 0 42 42"><path d="M1 21h40" stroke="#6c6c6c" stroke-width="10" /></svg></button>
                <button aria-label="Zoom in"><svg width="42" height="42" viewBox="0 0 42 42"><path d="M1 21h40M21 1v40" stroke="#6c6c6c" stroke-width="10" /></svg></button>
              </div>
              <h2>Clipboard</h2>
              <p id="clip">Text copied/cut within OffiDocs will appear here. Changes to the text below will affect the remote clipboard.</p>
              <textarea aria-labelledby="clip"></textarea>
            </div>
            <div class="vbar" aria-hidden="true">
              <svg width="13" height="7" viewBox="0 0 13 7"><path d="M0 7h13L6.500 0z" fill="#a0a0a0" /></svg><i></i>
              <svg width="13" height="7" viewBox="0 0 13 7"><path d="M0 0h13L6.500 7z" fill="#505050" /></svg>
            </div>
          </div>
        </aside>
        <main class="remote"><div class="desk"><audacity-window></audacity-window></div></main>
        <aside class="right">
          <div class="blank"></div>
          <section class="apps">
            <h3>OffiDocs Apps:</h3>
            <div class="strip">
              ${apps.map((a) => html`<a href="#" aria-label=${a.name}><svg width="84" height="84" viewBox="0 0 84 84">
                <rect width="84" height="84" rx="8" fill=${a.bg} />${page(a.art)}
                <rect x="10" y="48" width="66" height="22" rx="4" fill=${a.band} />
                <text x="43" y="66" text-anchor="middle">${a.name}</text></svg></a>`)}
            </div>
            <div class="hbar" aria-hidden="true">
              <svg width="7" height="13" viewBox="0 0 7 13"><path d="M7 0v13L0 6.500z" fill="#a0a0a0" /></svg><i></i>
              <svg width="7" height="13" viewBox="0 0 7 13"><path d="M0 0v13l7-6.500z" fill="#505050" /></svg>
            </div>
          </section>
        </aside>
      </div>
    `;
  }
}
